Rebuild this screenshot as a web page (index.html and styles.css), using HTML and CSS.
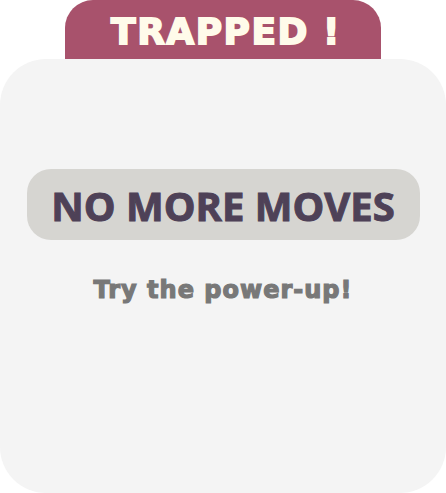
FILE: index.html
```html
<!DOCTYPE html>
<html>
<head>
<meta charset="utf-8">
<link rel="stylesheet" href="styles.css">
</head>
<body>
<div class="panel">
  <div class="tab"><span class="tab-title">TRAPPED !</span></div>
  <div class="card">
    <div class="pill"><span class="pill-text">NO MORE MOVES</span></div>
    <p class="hint">Try the power-up!</p>
  </div>
</div>
</body>
</html>
```

FILE: styles.css
```css
html, body {
  margin: 0;
  padding: 0;
  background: #ffffff;
}
.panel {
  width: 446px;
  height: 493px;
  display: flex;
  flex-direction: column;
  align-items: center;
}
.tab {
  width: 316px;
  height: 59px;
  background: #a8526c;
  border-radius: 28px 28px 0 0;
  display: flex;
  justify-content: center;
  align-items: center;
  box-sizing: border-box;
  padding-top: 4px;
  padding-left: 6px;
}
.tab-title {
  font-family: "DejaVu Sans", sans-serif;
  font-weight: 700;
  font-size: 36px;
  letter-spacing: 1.5px;
  color: #fffbea;
  line-height: 1;
  -webkit-text-stroke: 1.8px #fffbea;
}
.card {
  width: 446px;
  height: 434px;
  background: #f4f4f4;
  border-radius: 46px;
  display: flex;
  flex-direction: column;
  align-items: center;
  padding-top: 110px;
  box-sizing: border-box;
}
.pill {
  width: 393px;
  height: 71px;
  background: #d6d5d1;
  border-radius: 24px;
  display: flex;
  justify-content: center;
  align-items: center;
}
.pill-text {
  font-family: "Open Sans", sans-serif;
  font-weight: 700;
  font-size: 40px;
  color: #4e4157;
  line-height: 1;
  -webkit-text-stroke: 1px #4e4157;
  padding-top: 2px;
}
.hint {
  margin: 38px 0 0;
  font-family: "DejaVu Sans", sans-serif;
  font-weight: 700;
  font-size: 24px;
  letter-spacing: 1px;
  color: #787878;
  line-height: 1;
  -webkit-text-stroke: 1.2px #787878;
}
```
